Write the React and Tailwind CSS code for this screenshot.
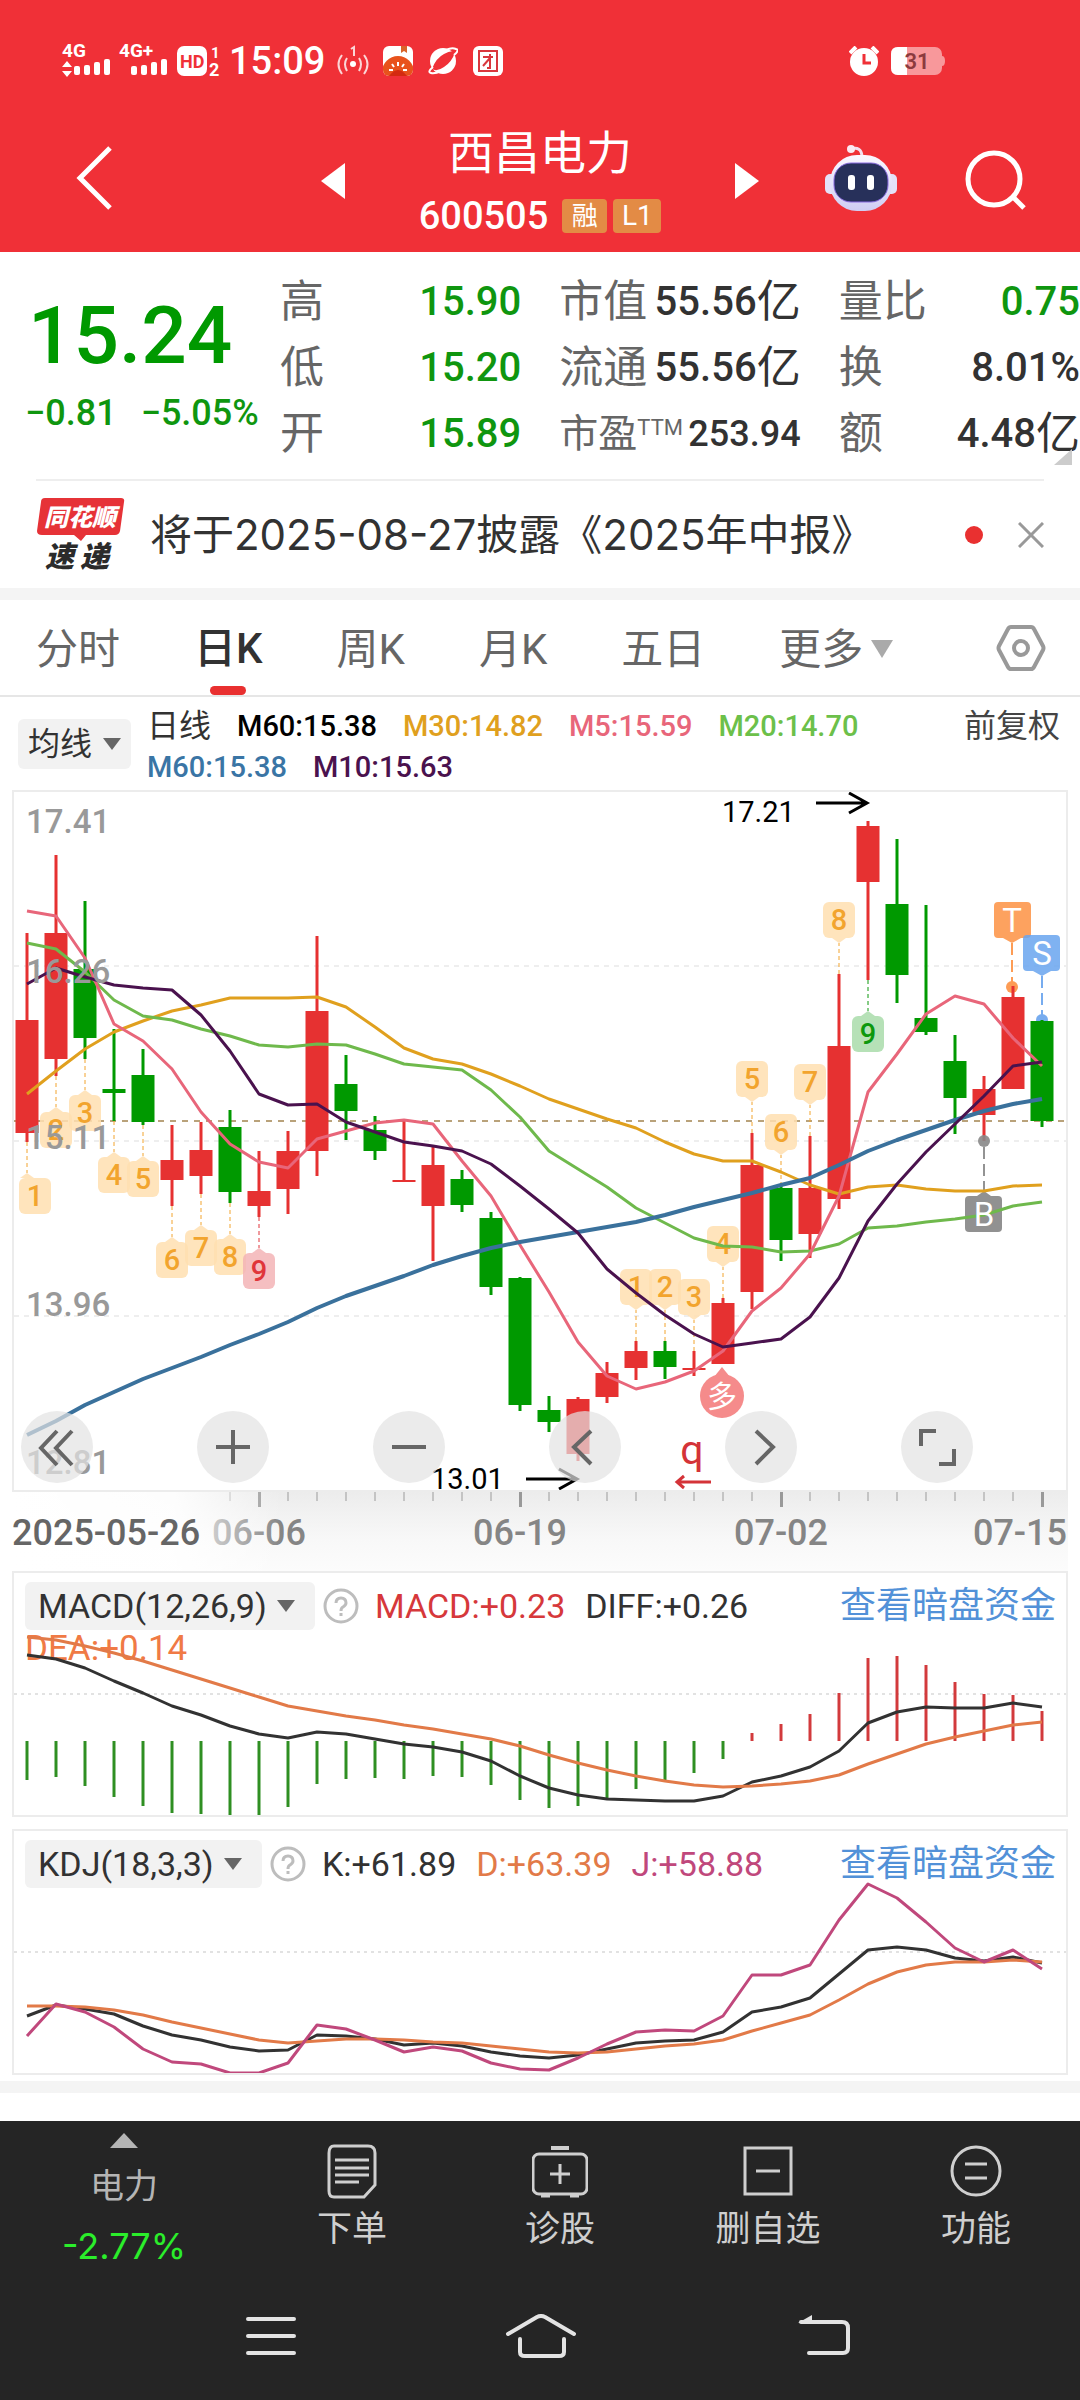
import { useState } from "react";

const RED = "#e63131";
const GREEN = "#009900";

// x of the n-th trading day in every chart
const dayX = (i) => 27 + 29 * i;

// [direction, high, body top, body bottom, low]
const candles = [
  ["up", 934, 1021, 1134, 1143],
  ["up", 856, 934, 1060, 1077],
  ["down", 902, 970, 1039, 1060],
  ["down", 1030, 1090, 1094, 1122],
  ["down", 1050, 1076, 1123, 1126],
  ["up", 1126, 1161, 1181, 1207],
  ["up", 1123, 1151, 1177, 1195],
  ["down", 1111, 1128, 1193, 1204],
  ["up", 1152, 1192, 1207, 1218],
  ["up", 1132, 1152, 1190, 1215],
  ["up", 937, 1012, 1152, 1177],
  ["down", 1056, 1085, 1112, 1141],
  ["down", 1117, 1131, 1152, 1161],
  ["up", 1122, 1181, 1183, 1183],
  ["up", 1148, 1166, 1207, 1262],
  ["down", 1171, 1180, 1206, 1213],
  ["down", 1213, 1219, 1288, 1296],
  ["down", 1278, 1279, 1406, 1412],
  ["down", 1397, 1411, 1423, 1433],
  ["up", 1398, 1400, 1455, 1462],
  ["up", 1363, 1374, 1398, 1404],
  ["up", 1342, 1352, 1369, 1381],
  ["down", 1342, 1352, 1368, 1380],
  ["up", 1352, 1369, 1371, 1377],
  ["up", 1299, 1304, 1365, 1365],
  ["up", 1134, 1166, 1293, 1310],
  ["down", 1187, 1189, 1241, 1262],
  ["up", 1137, 1189, 1235, 1259],
  ["up", 975, 1047, 1200, 1210],
  ["up", 822, 827, 883, 981],
  ["down", 840, 905, 976, 1004],
  ["down", 906, 1019, 1033, 1036],
  ["down", 1036, 1062, 1099, 1135],
  ["up", 1077, 1090, 1116, 1142],
  ["up", 987, 998, 1090, 1090],
  ["down", 1021, 1022, 1122, 1128],
];

const averages = [
  { color: "#e0a01e", width: 3, ys: [1095, 1072, 1050, 1033, 1022, 1012, 1006, 999, 999, 999, 998, 1008, 1028, 1049, 1060, 1065, 1075, 1087, 1100, 1110, 1120, 1129, 1143, 1155, 1162, 1162, 1173, 1186, 1195, 1188, 1186, 1190, 1192, 1192, 1187, 1186] },
  { color: "#6fb94c", width: 3, ys: [944, 950, 973, 1001, 1017, 1021, 1030, 1037, 1046, 1048, 1045, 1046, 1055, 1065, 1068, 1071, 1091, 1118, 1152, 1170, 1188, 1209, 1224, 1239, 1247, 1248, 1253, 1252, 1245, 1229, 1227, 1223, 1220, 1216, 1207, 1203] },
  { color: "#e8667a", width: 3, ys: [912, 917, 959, 1025, 1042, 1070, 1113, 1145, 1163, 1169, 1140, 1132, 1124, 1121, 1125, 1162, 1197, 1246, 1293, 1343, 1377, 1390, 1383, 1372, 1352, 1312, 1289, 1255, 1197, 1093, 1055, 1015, 997, 1005, 1039, 1067] },
  { color: "#3a719c", width: 4, ys: [1436, 1422, 1406, 1393, 1380, 1369, 1358, 1346, 1335, 1323, 1309, 1297, 1287, 1277, 1266, 1257, 1249, 1243, 1238, 1233, 1228, 1223, 1216, 1208, 1201, 1194, 1186, 1179, 1166, 1152, 1141, 1131, 1121, 1112, 1105, 1100] },
  { color: "#4a124e", width: 3, ys: [985, 969, 978, 986, 989, 991, 1016, 1052, 1095, 1106, 1105, 1123, 1133, 1143, 1147, 1152, 1165, 1187, 1210, 1234, 1270, 1294, 1316, 1335, 1348, 1344, 1340, 1318, 1279, 1222, 1185, 1153, 1125, 1097, 1067, 1063] },
];

// nine-turn counters: [day, number, side]
const counters = [
  [0, 1, "below"],
  [1, 2, "below"],
  [2, 3, "below"],
  [3, 4, "below"],
  [4, 5, "below"],
  [5, 6, "below"],
  [6, 7, "below"],
  [7, 8, "below"],
  [8, 9, "below", "#e0353a", "#f3b4b6"],
  [21, 1, "above"],
  [22, 2, "above"],
  [23, 3, "above"],
  [24, 4, "above"],
  [25, 5, "above"],
  [26, 6, "above"],
  [27, 7, "above"],
  [28, 8, "above"],
  [29, 9, "below", "#0d980d", "#a9dcaa"],
];

const macdBars = [1780, 1777, 1786, 1797, 1806, 1813, 1814, 1816, 1815, 1807, 1784, 1779, 1778, 1779, 1776, 1777, 1785, 1800, 1808, 1806, 1798, 1789, 1780, 1773, 1759, 1733, 1724, 1714, 1693, 1658, 1656, 1665, 1682, 1694, 1695, 1711];
const diff = [1655, 1659, 1668, 1681, 1693, 1706, 1715, 1726, 1734, 1738, 1732, 1734, 1739, 1744, 1747, 1752, 1761, 1776, 1788, 1795, 1799, 1800, 1801, 1801, 1796, 1782, 1776, 1767, 1751, 1723, 1712, 1707, 1708, 1708, 1703, 1707];
const dea = [1637, 1640, 1646, 1653, 1661, 1670, 1679, 1688, 1697, 1706, 1711, 1716, 1720, 1725, 1729, 1734, 1739, 1746, 1755, 1763, 1770, 1776, 1781, 1785, 1787, 1786, 1784, 1781, 1775, 1764, 1754, 1744, 1737, 1731, 1725, 1722];

const kLine = [2016, 2005, 2009, 2014, 2026, 2035, 2040, 2047, 2051, 2050, 2035, 2036, 2039, 2045, 2043, 2046, 2052, 2056, 2058, 2055, 2049, 2043, 2041, 2040, 2032, 2012, 2007, 1998, 1974, 1950, 1947, 1950, 1958, 1961, 1957, 1963];
const dLine = [2006, 2006, 2007, 2010, 2015, 2022, 2028, 2034, 2040, 2043, 2041, 2039, 2039, 2040, 2042, 2043, 2046, 2049, 2052, 2053, 2052, 2049, 2046, 2044, 2040, 2031, 2023, 2015, 2000, 1984, 1972, 1965, 1962, 1962, 1960, 1962];
const jLine = [2036, 2004, 2012, 2027, 2049, 2062, 2064, 2073, 2073, 2063, 2025, 2029, 2040, 2052, 2047, 2051, 2063, 2069, 2070, 2058, 2044, 2032, 2030, 2031, 2016, 1975, 1975, 1965, 1920, 1884, 1898, 1922, 1948, 1962, 1950, 1969];

const Line = ({ ys, color, width = 3 }) => (
  <polyline
    points={ys.map((y, i) => `${dayX(i)},${y}`).join(" ")}
    fill="none"
    stroke={color}
    strokeWidth={width}
    strokeLinejoin="round"
  />
);

const Triangle = ({ className, dir = "down" }) => (
  <svg viewBox="0 0 20 14" preserveAspectRatio="none" className={className} fill="currentColor" aria-hidden="true">
    {dir === "down" ? <path d="M0 0H20L10 14Z" /> : <path d="M10 0L20 14H0Z" />}
  </svg>
);

const Signal = ({ label, arrows }) => (
  <svg viewBox="0 0 48 36" className="w-12 h-9 overflow-visible" fill="#fff">
    <text x="0" y="14" fontSize="19" fontWeight="700" fontFamily="Roboto">{label}</text>
    {arrows && <path d="M5 18L10 24H0ZM5 34L0 28H10Z" />}
    <rect x="12" y="23" width="6" height="9" rx="2" />
    <rect x="22" y="22" width="6" height="10" rx="2" />
    <rect x="32" y="19" width="6" height="13" rx="2" />
    <rect x="42" y="16" width="6" height="16" rx="2" />
  </svg>
);

const StatusBar = () => (
  <div className="flex items-center h-[38px] pl-[62px] pr-[135px] text-white">
    <Signal label="4G" arrows />
    <div className="ml-[9px]">
      <Signal label="4G+" />
    </div>
    <svg viewBox="0 0 44 34" className="ml-[10px] w-11 h-[34px] overflow-visible">
      <rect x="0" y="2" width="30" height="30" rx="7" fill="#fff" />
      <text x="3" y="24" fontSize="18" fontWeight="700" fontFamily="Roboto" fill="#f03037">HD</text>
      <text x="34" y="14" fontSize="15" fontWeight="700" fontFamily="Roboto" fill="#fff">1</text>
      <text x="32" y="32" fontSize="18" fontWeight="700" fontFamily="Roboto" fill="#fff">2</text>
    </svg>
    <span className="ml-2 text-[38px] leading-[38px] font-medium">15:09</span>
    <svg viewBox="0 0 32 32" className="ml-3 w-8 h-8" fill="none" stroke="#fbd5d6" strokeWidth="2">
      <circle cx="16" cy="19" r="3" fill="#fff" stroke="none" />
      <path d="M10 13Q6 19 10 26M22 13Q26 19 22 26M5 10Q-2 19 5 29M27 10Q34 19 27 29" />
      <path d="M14 4L17 2V11" />
    </svg>
    <svg viewBox="0 0 30 30" className="ml-[14px] w-[30px] h-[30px]">
      <defs>
        <clipPath id="tomato"><rect width="30" height="30" rx="6" /></clipPath>
      </defs>
      <g clipPath="url(#tomato)">
        <rect width="30" height="30" fill="#fff" />
        <path d="M18 0H24V7L21 5L18 7Z" fill="#d9642a" />
        <circle cx="15" cy="26" r="16" fill="#e8521c" />
        <path d="M6 30Q15 18 24 30Z" fill="#d42a10" />
        <path d="M15 16V20M9 18L11 21M21 18L19 21M6 24H10M24 24H20" stroke="#fff" strokeWidth="2" />
      </g>
    </svg>
    <svg viewBox="0 0 30 30" className="ml-[15px] w-[30px] h-[30px]">
      <circle cx="15" cy="15" r="13" fill="#fff" />
      <path d="M4 23Q8 12 16 8Q23 4 27 6Q24 16 16 21Q9 26 4 23Z" fill="#f03037" />
      <path d="M5 21Q-1 26 3 27Q7 28 13 25M26 9Q32 4 28 3Q24 1 18 4" fill="none" stroke="#fff" strokeWidth="2" />
      <path d="M8 20Q11 13 17 9Q14 17 8 20Z" fill="#f03037" />
    </svg>
    <svg viewBox="0 0 30 30" className="ml-[15px] w-[30px] h-[30px]" fill="none">
      <rect width="30" height="30" rx="6" fill="#fff" />
      <rect x="6" y="5" width="18" height="20" stroke="#d9373d" strokeWidth="2" />
      <path d="M10 11H20M17 8V22H14M17 12L10 20" stroke="#d9373d" strokeWidth="2" />
    </svg>
    <svg viewBox="0 0 30 30" className="ml-auto w-[30px] h-[30px]">
      <path d="M1 7L7 1M29 7L23 1" stroke="#fff" strokeWidth="4" />
      <circle cx="15" cy="16" r="14" fill="#fff" />
      <path d="M15 8V17H22" fill="none" stroke="#f03037" strokeWidth="3" />
    </svg>
    <svg viewBox="0 0 54 28" className="ml-3 w-[54px] h-7">
      <rect width="51" height="28" rx="7" fill="#f8989b" />
      <path d="M51 9Q54 9 54 14T51 19Z" fill="#f8989b" />
      <path d="M7 0H16V28H7Q0 28 0 21V7Q0 0 7 0Z" fill="#fff" />
      <text x="26" y="22" textAnchor="middle" fontSize="22" fontWeight="600" fontFamily="Roboto" fill="#8c3a3e">31</text>
    </svg>
  </div>
);

const Robot = () => (
  <svg viewBox="0 0 72 68" className="w-[72px] h-[68px]">
    <defs>
      <linearGradient id="shell" x1="0" y1="0" x2="0" y2="1">
        <stop offset="0" stopColor="#fbf8ff" />
        <stop offset="1" stopColor="#cfcdf3" />
      </linearGradient>
    </defs>
    <path d="M26 5Q36 2 37 12" fill="none" stroke="#f3dfee" strokeWidth="3" />
    <circle cx="26" cy="5" r="4" fill="#fbeaf2" />
    <rect x="0" y="30" width="12" height="20" rx="5" fill="#e4e1f8" />
    <rect x="60" y="30" width="12" height="20" rx="5" fill="#e4e1f8" />
    <rect x="5" y="11" width="62" height="56" rx="27" fill="url(#shell)" />
    <rect x="9" y="19" width="54" height="39" rx="17" fill="#27305a" stroke="#8a6be0" strokeWidth="1" />
    <rect x="23" y="31" width="7" height="15" rx="3" fill="#fff" />
    <rect x="42" y="31" width="7" height="15" rx="3" fill="#fff" />
  </svg>
);

const Header = () => (
  <header className="bg-[#f03037] text-white pt-[42px] pb-[14px]">
    <StatusBar />
    <div className="flex items-center mt-[43px] pl-[76px] pr-[53px]">
      <button aria-label="返回" className="pb-[6px]">
        <svg viewBox="0 0 36 64" className="w-9 h-16" fill="none" stroke="#fff" strokeWidth="5">
          <path d="M34 2L4 32L34 62" />
        </svg>
      </button>
      <button aria-label="上一只" className="ml-[209px]">
        <svg viewBox="0 0 24 36" className="w-6 h-9" fill="#fff"><path d="M24 0V36L0 18Z" /></svg>
      </button>
      <div className="flex-1 flex flex-col items-center">
        <h1 className="text-[46px] leading-[60px] font-normal">西昌电力</h1>
        <div className="flex items-center mt-[11px] h-11">
          <span className="text-[38px] leading-[44px] font-medium">600505</span>
          <span className="ml-[14px] w-[45px] h-[34px] rounded bg-[#e38b45] text-[26px] leading-[34px] text-center">融</span>
          <span className="ml-[6px] w-12 h-[34px] rounded bg-[#e38b45] text-[28px] leading-[34px] text-center">L1</span>
        </div>
      </div>
      <button aria-label="下一只">
        <svg viewBox="0 0 24 36" className="w-6 h-9" fill="#fff"><path d="M0 0V36L24 18Z" /></svg>
      </button>
      <button aria-label="智能助手" className="ml-[66px] pb-[6px]"><Robot /></button>
      <button aria-label="搜索" className="ml-[68px] pb-[2px]">
        <svg viewBox="0 0 62 60" className="w-[62px] h-[60px]" fill="none" stroke="#fff" strokeWidth="5">
          <circle cx="29" cy="29" r="26" />
          <path d="M48 47L59 58" />
        </svg>
      </button>
    </div>
  </header>
);

const columns = [
  [
    ["高", "15.90", "text-[#0f960f]"],
    ["低", "15.20", "text-[#0f960f]"],
    ["开", "15.89", "text-[#0f960f]"],
  ],
  [
    ["市值", "55.56", "text-[#323232]", "亿"],
    ["流通", "55.56", "text-[#323232]", "亿"],
    ["市盈", "253.94", "text-[#323232]"],
  ],
  [
    ["量比", "0.75", "text-[#0f960f]"],
    ["换", "8.01%", "text-[#323232]"],
    ["额", "4.48", "text-[#323232]", "亿"],
  ],
];

const Quote = () => (
  <section className="relative flex pt-[17px] pb-3">
    <div className="w-[280px] shrink-0 text-[#009900] font-medium">
      <p className="mt-[27px] pl-7 text-[80px] leading-[80px]">15.24</p>
      <p className="mt-[15px] pl-[25px] flex gap-6 text-[36px] leading-[44px] text-[#0f960f]">
        <span>−0.81</span>
        <span>−5.05%</span>
      </p>
    </div>
    <div className="flex-1 grid grid-cols-3 gap-x-[38px]">
      {columns.map((rows, c) => (
        <dl key={c}>
          {rows.map(([name, value, color, unit]) => (
            <div key={name} className="flex items-center justify-between h-[66px] whitespace-nowrap">
              {name === "市盈" ? (
                <dt className="flex text-[39px] leading-[66px] text-[#666]">
                  市盈<span className="text-[22px] leading-[54px]">TTM</span>
                </dt>
              ) : (
                <dt className="text-[44px] leading-[66px] text-[#666]">{name}</dt>
              )}
              <dd className={`flex leading-[66px] font-medium ${name === "市盈" ? "text-[36px]" : "text-[40px]"} ${color}`}>
                {value}
                {unit && <span className="text-[44px] font-normal">{unit}</span>}
              </dd>
            </div>
          ))}
        </dl>
      ))}
    </div>
    <svg viewBox="0 0 18 16" className="absolute right-2 bottom-[14px] w-[18px] h-4" fill="#ccc">
      <path d="M18 0V16H0Z" />
    </svg>
  </section>
);

const Notice = () => (
  <section className="mx-9 flex items-center h-[109px] border-t-2 border-[#eee]">
    <svg viewBox="0 0 90 74" className="w-[90px] h-[74px] overflow-visible">
      <path d="M9 0H85Q89 0 88 4L84 33Q83 37 79 37H50L45 43L38 37H6Q1 37 1 33L5 4Q5 0 9 0Z" fill="#e63237" />
      <g fontFamily="'Noto Sans CJK SC'" fontWeight="900" fontStyle="italic">
        <text x="44" y="28" textAnchor="middle" fontSize="24" fill="#fff">同花顺</text>
        <text x="9" y="69" fontSize="29" fill="#2b2b2b">速</text>
        <text x="44" y="69" fontSize="29" fill="#2b2b2b">递</text>
      </g>
    </svg>
    <a href="#report" className="ml-6 font-[Inter,'Noto_Sans_CJK_SC',sans-serif] text-[42px] leading-[56px] text-[#323232] whitespace-nowrap">
      将于2025-08-27披露《2025年中报》
    </a>
    <span className="ml-auto w-[18px] h-[18px] rounded-full bg-[#e93030]" />
    <button aria-label="关闭" className="ml-[35px]">
      <svg viewBox="0 0 26 26" className="w-[26px] h-[26px]" stroke="#999" strokeWidth="3">
        <path d="M1 1L25 25M25 1L1 25" />
      </svg>
    </button>
  </section>
);

const periods = ["分时", "日K", "周K", "月K", "五日", "更多"];

const Tabs = () => {
  const [active, setActive] = useState("日K");

  return (
    <nav className="flex items-center h-[97px] border-b-2 border-[#e6e6e6] pl-9 pr-[34px]">
      <div className="flex gap-[74px] h-full">
        {periods.map((p) => (
          <button
            key={p}
            onClick={() => setActive(p)}
            className={`flex flex-col items-center justify-between text-[42px] whitespace-nowrap ${
              active === p ? "font-medium text-[#323232]" : "text-[#666]"
            }`}
          >
            <span className="flex items-center h-[88px] pt-[10px]">
              {p}
              {p === "更多" && <Triangle className="ml-2 w-[22px] h-[18px] text-[#aaa]" />}
            </span>
            {active === p && <span className="w-9 h-[9px] rounded-full bg-[#e93030]" />}
          </button>
        ))}
      </div>
      <button aria-label="设置" className="ml-auto">
        <svg viewBox="0 0 50 48" className="w-[50px] h-12" fill="none" stroke="#999" strokeWidth="4">
          <path d="M15 3H35Q37 3 38 5L47 22Q48 24 47 26L38 43Q37 45 35 45H15Q13 45 12 43L3 26Q2 24 3 22L12 5Q13 3 15 3Z" />
          <circle cx="25" cy="24" r="7" />
        </svg>
      </button>
    </nav>
  );
};

const Picker = ({ label, value, className }) => (
  <label className={`inline-flex items-center rounded-md bg-[#f2f2f2] text-[#323232] ${className}`}>
    <select aria-label={label} className="appearance-none bg-transparent outline-none">
      <option>{value}</option>
    </select>
    <Triangle className="ml-[10px] w-[18px] h-3 text-[#666]" />
  </label>
);

const AverageLegend = () => (
  <div className="flex items-start pl-[18px] pr-5 pt-[9px] pb-[2px] text-[29px] leading-[41px]">
    <Picker label="指标" value="均线" className="mt-[13px] h-[50px] px-[10px] text-[32px]" />
    <div className="ml-4 flex-1 flex flex-wrap gap-x-[26px] font-medium whitespace-nowrap">
      <span className="text-[32px] font-normal text-[#323232]">日线</span>
      <span className="text-black">M60:15.38</span>
      <span className="text-[#e0a01e]">M30:14.82</span>
      <span className="text-[#e8667a]">M5:15.59</span>
      <span className="text-[#6cc04a]">M20:14.70</span>
      <span className="basis-full" />
      <span className="text-[#3a75a5]">M60:15.38</span>
      <span className="text-[#4a124e]">M10:15.63</span>
    </div>
    <button className="text-[32px] text-[#444]">前复权</button>
  </div>
);

const Counter = ({ day, n, side, color = "#f2a42e", fill = "#ffdfb0" }) => {
  const [, high, , , low] = candles[day];
  const x = dayX(day);
  const down = side === "below";
  const start = down ? low : high;
  const tip = down ? low + 31 : high - 31;
  const top = down ? tip + 5 : tip - 41;
  const left = Math.max(x - 16, 19);

  return (
    <g>
      <path d={`M${x} ${start}V${tip}`} stroke={color} strokeDasharray="4 3" />
      <g fill={fill} fillOpacity="0.85">
        <rect x={left} y={top} width="32" height="36" rx="6" />
        <path d={down ? `M${x - 7} ${tip + 5}L${x} ${tip}L${x + 7} ${tip + 5}Z` : `M${x - 7} ${tip - 5}L${x} ${tip}L${x + 7} ${tip - 5}Z`} />
      </g>
      <text x={left + 16} y={top + 28} textAnchor="middle" fontSize="29" fontWeight="500" fill={color}>{n}</text>
    </g>
  );
};

const zoomButtons = [
  ["最左", "M36 20L20 37L36 54M51 20L35 37L51 54"],
  ["放大", "M36 19V53M19 36H53"],
  ["缩小", "M19 36H53"],
  ["左移", "M42 20L25 36L42 53"],
  ["右移", "M31 20L48 36L31 53"],
  ["全屏", "M20 35V20H35M38 53H53V38"],
];

const PriceChart = () => (
  <div className="relative mx-3 border-2 border-[#ececec]">
    <svg viewBox="14 793 1052 698" className="block w-full" fontFamily="Roboto">
      <g stroke="#ddd" strokeWidth="1" strokeDasharray="5 5">
        <path d="M14 967H1066M14 1142H1066M14 1317H1066" />
      </g>
      <path d="M14 1122H1066" stroke="#b9a27a" strokeWidth="2" strokeDasharray="6 6" />

      <g opacity="0.9">
        <path d="M1012 944V984" stroke="#fd9243" strokeWidth="2" strokeDasharray="12 5" />
        <circle cx="1012" cy="988" r="6" fill="#fd9243" />
        <path d="M1042 977V1017" stroke="#69a4ee" strokeWidth="2" strokeDasharray="12 5" />
        <circle cx="1042" cy="1021" r="6" fill="#69a4ee" />
        <path d="M984 1148V1192" stroke="#888" strokeWidth="2" strokeDasharray="12 5" />
      </g>

      {candles.map(([dir, high, top, bottom, low], i) => {
        const color = dir === "up" ? RED : GREEN;
        return (
          <g key={i} fill={color}>
            <rect x={dayX(i) - 1.5} y={high} width="3" height={low - high} />
            <rect x={dayX(i) - 11.5} y={top} width="23" height={bottom - top} />
          </g>
        );
      })}
      <circle cx="984" cy="1142" r="6" fill="#888" fillOpacity="0.9" />

      {counters.map(([day, n, side, color, fill]) => (
        <Counter key={day} day={day} n={n} side={side} color={color} fill={fill} />
      ))}

      <g fill="#8b8b8b" fillOpacity="0.95">
        <rect x="965" y="1197" width="37" height="36" rx="4" />
        <path d="M977 1197L984 1192L991 1197Z" />
      </g>
      {averages.map((a) => (
        <Line key={a.color} ys={a.ys} color={a.color} width={a.width} />
      ))}

      <g fill="#fd9243" fillOpacity="0.85">
        <rect x="994" y="903" width="37" height="36" rx="4" />
        <path d="M1003 939H1021L1012 944Z" />
      </g>
      <g fill="#69a4ee" fillOpacity="0.85">
        <rect x="1023" y="936" width="37" height="36" rx="4" />
        <path d="M1033 972H1051L1042 977Z" />
      </g>
      <g fill="#fff" fontSize="33" textAnchor="middle">
        <text x="1012" y="933">T</text>
        <text x="1042" y="966">S</text>
        <text x="984" y="1227">B</text>
      </g>

      <g fill="#f58b8b">
        <circle cx="722" cy="1397" r="22" />
        <path d="M714 1378L722 1368L730 1378Z" />
      </g>
      <text x="722" y="1408" textAnchor="middle" fontSize="30" fontFamily="'Noto Sans CJK SC'" fill="#fff">多</text>

      <g fontSize="33" fontWeight="500" fill="#999">
        <text x="26" y="834">17.41</text>
        <text x="26" y="984">16.26</text>
        <text x="26" y="1150">15.11</text>
        <text x="26" y="1317">13.96</text>
        <text x="26" y="1475">12.81</text>
      </g>

      <g fontSize="29">
        <text x="722" y="823">17.21</text>
        <text x="431" y="1490">13.01</text>
      </g>
      <g fill="none" stroke="#000" strokeWidth="3">
        <path d="M816 804H866M849 794L867 804L849 814" />
        <path d="M526 1480H576M559 1470L577 1480L559 1490" />
      </g>
      <text x="692" y="1465" textAnchor="middle" fontSize="41" fill="#d43338">q</text>
      <path d="M711 1483H677M684 1477L677 1483L684 1489" fill="none" stroke="#d43338" strokeWidth="3" />
    </svg>
    <div className="absolute left-[7px] bottom-[7px] flex gap-[104px]">
      {zoomButtons.map(([name, d]) => (
        <button key={name} aria-label={name} className="w-[72px] h-[72px] rounded-full bg-[#e3e3e3]/70">
          <svg viewBox="0 0 72 72" className="w-full h-full" fill="none" stroke="#666" strokeWidth="4">
            <path d={d} />
          </svg>
        </button>
      ))}
    </div>
  </div>
);

const DateAxis = () => (
  <svg viewBox="0 1493 1080 79" className="block w-full" fontFamily="Roboto">
    <defs>
      <linearGradient id="axisDown" x1="0" y1="0" x2="0" y2="1">
        <stop offset="0" stopColor="#ececec" />
        <stop offset="0.6" stopColor="#f8f8f8" />
        <stop offset="1" stopColor="#fcfcfc" />
      </linearGradient>
      <linearGradient id="axisFade" x1="0" y1="0" x2="1" y2="0">
        <stop offset="0" stopColor="#fff" />
        <stop offset="0.6" stopColor="#fff" stopOpacity="0.9" />
        <stop offset="1" stopColor="#fff" stopOpacity="0" />
      </linearGradient>
    </defs>
    <rect x="12" y="1493" width="1056" height="79" fill="url(#axisDown)" />
    {Array.from({ length: 29 }, (_, k) => k + 7).map((i) => {
      const major = i % 9 === 8;
      return (
        <rect
          key={i}
          x={dayX(i) - 1}
          y="1493"
          width={major ? 3 : 2}
          height={major ? 15 : 9}
          fill={major ? "#999" : "#c4c4c4"}
        />
      );
    })}
    <g fontSize="36" fontWeight="500" fill="#858585" textAnchor="middle">
      <text x="259" y="1546">06-06</text>
      <text x="520" y="1546">06-19</text>
      <text x="781" y="1546">07-02</text>
      <text x="1067" y="1546" textAnchor="end">07-15</text>
    </g>
    <rect x="12" y="1493" width="270" height="79" fill="url(#axisFade)" />
    <text x="12" y="1546" fontSize="36" fontWeight="500" fill="#666">2025-05-26</text>
  </svg>
);

const IndicatorPanel = ({ viewBox, name, values, children }) => (
  <section className="mx-3 grid border-2 border-[#ececec]">
    <svg viewBox={viewBox} className="[grid-area:1/1] block w-full">{children}</svg>
    <div className="[grid-area:1/1] flex items-start pt-[9px] pl-[11px] pr-[10px] text-[34px] leading-[48px] whitespace-nowrap">
      <Picker label="指标" value={name} className="h-12 pl-[13px] pr-5" />
      <button aria-label="说明" className="ml-2 mt-[6px]">
        <svg viewBox="0 0 36 36" className="w-9 h-9" fill="none" stroke="#bdbdbd" strokeWidth="3">
          <circle cx="18" cy="18" r="16" />
          <path d="M13 15Q13 10 18 10T23 15Q23 17 20 19Q18 20 18 23M18 25V28" />
        </svg>
      </button>
      <div className="ml-4 flex gap-5">
        {values.map(([text, color]) => (
          <span key={text} className={color}>{text}</span>
        ))}
      </div>
      <a href="#funds" className="ml-auto text-[36px] text-[#5291d8]">查看暗盘资金</a>
    </div>
  </section>
);

const Indicators = () => (
  <>
    <IndicatorPanel
      viewBox="14 1573 1052 242"
      name="MACD(12,26,9)"
      values={[
        ["MACD:+0.23", "text-[#d6383b]"],
        ["DIFF:+0.26", "text-[#323232]"],
      ]}
    >
      <path d="M14 1694H1066" stroke="#e2e2e2" strokeWidth="2" strokeDasharray="3 4" />
      {macdBars.map((y, i) => (
        <path key={i} d={`M${dayX(i)} 1741V${y}`} stroke={y > 1741 ? "#2f8f22" : "#d23a3c"} strokeWidth="3" />
      ))}
      <text x="25" y="1660" fontSize="35" fontFamily="Roboto" fill="#f07a45">DEA:+0.14</text>
      <Line ys={diff} color="#323232" />
      <Line ys={dea} color="#e27a48" />
    </IndicatorPanel>
    <div className="h-3" />
    <IndicatorPanel
      viewBox="14 1831 1052 242"
      name="KDJ(18,3,3)"
      values={[
        ["K:+61.89", "text-[#323232]"],
        ["D:+63.39", "text-[#e27a48]"],
        ["J:+58.88", "text-[#c0487c]"],
      ]}
    >
      <path d="M14 1952H1066" stroke="#e2e2e2" strokeWidth="2" strokeDasharray="3 4" />
      <Line ys={kLine} color="#323232" />
      <Line ys={dLine} color="#e27a48" />
      <Line ys={jLine} color="#c0487c" />
    </IndicatorPanel>
  </>
);

const actions = [
  [
    "下单",
    <>
      <path d="M8 3H42Q49 3 49 10V42L38 54H8Q3 54 3 48V10Q3 3 8 3Z" />
      <path d="M9 17H43M9 25H43M9 32H43M9 39H33" />
    </>,
  ],
  [
    "诊股",
    <>
      <path d="M17 5H35" strokeWidth="4" />
      <rect x="-1" y="11" width="54" height="40" rx="6" />
      <path d="M26 21V41M16 31H36M7 53H16M36 53H45" />
    </>,
  ],
  [
    "删自选",
    <>
      <rect x="3" y="5" width="46" height="46" />
      <path d="M14 28H38" />
    </>,
  ],
  [
    "功能",
    <>
      <circle cx="26" cy="28" r="24" />
      <path d="M15 21H37M15 35H37" />
    </>,
  ],
];

const Footer = () => (
  <footer className="flex-1 bg-[#252525] text-[#cfcfcf] pb-[42px]">
    <div className="flex h-[159px]">
      <a href="#sector" className="w-[248px] shrink-0 flex flex-col items-center pt-3 text-[#b5b5b5]">
        <Triangle dir="up" className="w-7 h-[15px]" />
        <span className="mt-[15px] text-[34px] leading-[46px]">电力</span>
        <span className="mt-4 font-[Inter] text-[36px] leading-[42px] text-[#2bee2b]">-2.77%</span>
      </a>
      <div className="flex-1 grid grid-cols-4">
        {actions.map(([name, icon]) => (
          <button key={name} className="flex flex-col items-center pt-[22px]">
            <svg viewBox="-2 0 56 57" className="w-14 h-[57px]" fill="none" stroke="#cfcfcf" strokeWidth="3">
              {icon}
            </svg>
            <span className="mt-[6px] text-[35px] leading-[48px]">{name}</span>
          </button>
        ))}
      </div>
    </div>
    <div className="flex items-center mt-[34px] pl-[245px]">
      <button aria-label="菜单">
        <svg viewBox="0 0 52 44" className="w-[52px] h-11" stroke="#e3e3e3" strokeWidth="4" strokeLinecap="round">
          <path d="M3 5H49M3 22H49M3 39H49" />
        </svg>
      </button>
      <button aria-label="主页" className="ml-[208px]">
        <svg viewBox="0 0 72 44" className="w-[72px] h-11" fill="none" stroke="#e3e3e3" strokeWidth="4" strokeLinecap="round" strokeLinejoin="round">
          <path d="M3 20L32 3Q36 1 40 3L69 20" />
          <path d="M15 25V38Q15 42 20 42H54Q59 42 59 38V25" />
        </svg>
      </button>
      <button aria-label="后退" className="ml-[220px]">
        <svg viewBox="0 0 54 44" className="w-[54px] h-11" fill="none" stroke="#e3e3e3" strokeWidth="4" strokeLinecap="round">
          <path d="M4 8H45Q51 8 51 14V34Q51 39 46 39H12" />
          <path d="M1 9L15 1V9Z" fill="#e3e3e3" stroke="none" />
        </svg>
      </button>
    </div>
  </footer>
);

const App = () => {
  return (
    <div className="min-h-screen flex flex-col bg-white font-[Roboto,'Noto_Sans_CJK_SC',sans-serif]">
      <Header />
      <Quote />
      <Notice />
      <div className="h-3 bg-[#f4f4f4]" />
      <Tabs />
      <AverageLegend />
      <PriceChart />
      <DateAxis />
      <Indicators />
      <div className="mt-[6px] mb-7 h-3 bg-[#f4f4f4]" />
      <Footer />
    </div>
  );
};

export default App;
